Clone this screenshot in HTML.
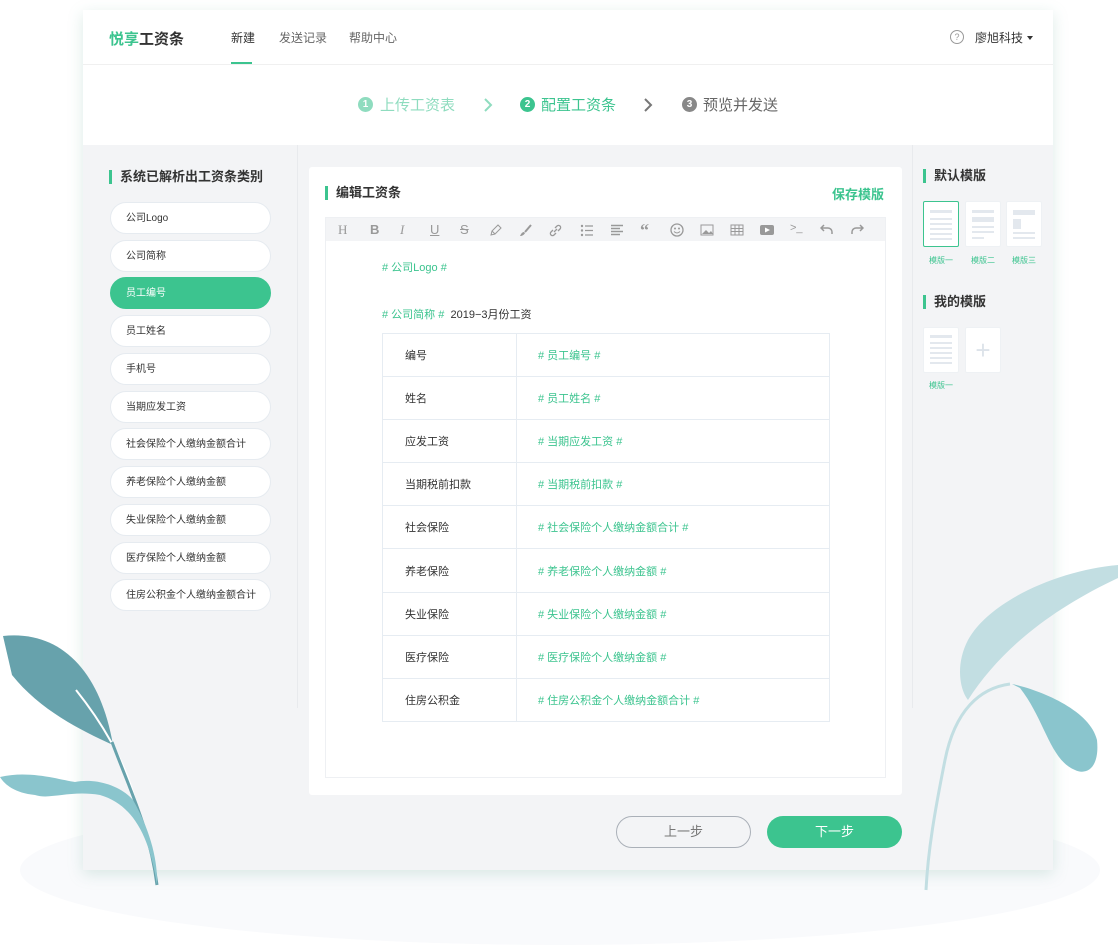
<!DOCTYPE html>
<html><head><meta charset="utf-8">
<style>
*{margin:0;padding:0;box-sizing:border-box}
body{width:1119px;height:950px;background:#fff;position:relative;overflow:hidden;font-family:"Liberation Sans","Noto Sans CJK SC",sans-serif;color:#333}
.a{position:absolute}
.card{left:83px;top:10px;width:970px;height:860px;background:#f3f4f6;box-shadow:0 4px 14px rgba(120,180,160,.25)}
.hdr{left:83px;top:10px;width:970px;height:135px;background:#fff}
.nav{font-size:12px;color:#666;top:29px}
.pill{left:110px;width:161px;height:32px;border-radius:16px;background:#fff;border:1px solid #e6ebf0;font-size:10px;padding-left:15px;line-height:32px;color:#333}
.pill.on{background:#3cc48f;color:#fff;border-color:#3cc48f}
.ttl{font-size:13px;color:#333;font-weight:bold;padding-left:8px;border-left:3px solid #3cc48f;line-height:14px}
.g{color:#3cc48f}
table{border-collapse:collapse;position:absolute;left:382px;top:333px;width:448px}
td{border:1px solid #e6ecf2;height:43.1px;font-size:11px}
td:first-child{width:134px;padding-left:22px;color:#333}
td:last-child{padding-left:21px;color:#3cc48f}
.tb{top:222px;font-size:13px;color:#999}
.tpl{width:36px;height:46px;background:#fff;border:1px solid #eef1f4;border-radius:2px}
.tl{font-size:8px;color:#3cc48f}
.ln{position:absolute;left:6px;right:6px;height:2px;background:#e3e8ee}
</style></head><body>
<svg class="a" style="left:0;top:0" width="1119" height="950">
<ellipse cx="560" cy="870" rx="540" ry="75" fill="#f9fafc"/>
</svg>
<div class="a card"></div>
<div class="a hdr"></div>
<div class="a" style="left:83px;top:64px;width:970px;height:1px;background:#f0f0f0"></div>
<div class="a" style="left:109px;top:28px;font-size:15px;font-weight:bold"><span class="g">悦享</span>工资条</div>
<div class="a nav" style="left:231px;color:#333">新建</div>
<div class="a" style="left:231px;top:62px;width:21px;height:2px;background:#3cc48f"></div>
<div class="a nav" style="left:279px">发送记录</div>
<div class="a nav" style="left:349px">帮助中心</div>
<div class="a" style="left:950px;top:30px;width:14px;height:14px;border:1px solid #999;border-radius:50%;font-size:9px;color:#999;text-align:center;line-height:12px">?</div>
<div class="a" style="left:975px;top:29px;font-size:12px;color:#333">廖旭科技</div>
<div class="a" style="left:1027px;top:36px;border-left:3px solid transparent;border-right:3px solid transparent;border-top:4px solid #333"></div>

<div class="a" style="left:358px;top:97px;width:15px;height:15px;border-radius:50%;background:#8fdcbf;color:#fff;font-size:10px;text-align:center;line-height:15px;font-weight:bold">1</div>
<div class="a" style="left:380px;top:94px;font-size:15px;color:#8fdcbf">上传工资表</div>
<svg class="a" style="left:482px;top:97px" width="12" height="16"><path d="M3 2l6 6-6 6" stroke="#8fdcbf" stroke-width="2" fill="none"/></svg>
<div class="a" style="left:520px;top:97px;width:15px;height:15px;border-radius:50%;background:#3cc48f;color:#fff;font-size:10px;text-align:center;line-height:15px;font-weight:bold">2</div>
<div class="a" style="left:541px;top:94px;font-size:15px;color:#3cc48f">配置工资条</div>
<svg class="a" style="left:642px;top:97px" width="12" height="16"><path d="M3 2l6 6-6 6" stroke="#777" stroke-width="2" fill="none"/></svg>
<div class="a" style="left:682px;top:97px;width:15px;height:15px;border-radius:50%;background:#888;color:#fff;font-size:10px;text-align:center;line-height:15px;font-weight:bold">3</div>
<div class="a" style="left:703px;top:94px;font-size:15px;color:#666">预览并发送</div>

<div class="a" style="left:297px;top:145px;width:1px;height:563px;background:#e8eaed"></div>
<div class="a" style="left:912px;top:145px;width:1px;height:563px;background:#e8eaed"></div>

<div class="a ttl" style="left:109px;top:170px">系统已解析出工资条类别</div>
<div class="a pill" style="top:202px">公司Logo</div>
<div class="a pill" style="top:240px">公司简称</div>
<div class="a pill on" style="top:277px">员工编号</div>
<div class="a pill" style="top:315px">员工姓名</div>
<div class="a pill" style="top:353px">手机号</div>
<div class="a pill" style="top:391px">当期应发工资</div>
<div class="a pill" style="top:428px">社会保险个人缴纳金额合计</div>
<div class="a pill" style="top:466px">养老保险个人缴纳金额</div>
<div class="a pill" style="top:504px">失业保险个人缴纳金额</div>
<div class="a pill" style="top:542px">医疗保险个人缴纳金额</div>
<div class="a pill" style="top:579px">住房公积金个人缴纳金额合计</div>

<div class="a" style="left:309px;top:167px;width:593px;height:628px;background:#fff;border-radius:3px"></div>
<div class="a ttl" style="left:325px;top:186px">编辑工资条</div>
<div class="a g" style="left:832px;top:184px;font-size:13px;font-weight:bold">保存模版</div>
<div class="a" style="left:325px;top:217px;width:561px;height:561px;border:1px solid #eef0f3"></div>
<div class="a" style="left:326px;top:218px;width:559px;height:23px;background:#f3f4f6"></div>
<div class="a tb" style="left:338px;font-family:'Liberation Serif',serif">H</div>
<div class="a tb" style="left:370px;font-weight:bold">B</div>
<div class="a tb" style="left:400px;font-style:italic;font-family:'Liberation Serif',serif">I</div>
<div class="a tb" style="left:430px;text-decoration:underline">U</div>
<div class="a tb" style="left:460px;text-decoration:line-through">S</div>
<svg class="a" style="left:489px;top:224px" width="13" height="13"><path d="M2 11l1-4 6-6 3 3-6 6z M3 7l3 3" stroke="#999" fill="none"/></svg>
<svg class="a" style="left:519px;top:224px" width="13" height="13"><path d="M12 1L6 8" stroke="#999" stroke-width="2"/><path d="M5 8c-2 0-3 2-4 4 2 0 4-1 5-3z" fill="#999"/></svg>
<svg class="a" style="left:549px;top:224px" width="13" height="13"><path d="M5 8l3-3M4 6l-2 2a2 2 0 003 3l2-2M9 7l2-2a2 2 0 00-3-3L6 4" stroke="#999" fill="none" stroke-width="1.3"/></svg>
<svg class="a" style="left:580px;top:224px" width="13" height="13"><circle cx="2" cy="2" r="1.2" fill="#999"/><circle cx="2" cy="6.5" r="1.2" fill="#999"/><circle cx="2" cy="11" r="1.2" fill="#999"/><path d="M5 2h8M5 6.5h8M5 11h8" stroke="#999" stroke-width="1.3"/></svg>
<svg class="a" style="left:610px;top:224px" width="13" height="13"><path d="M1 1.5h12M1 4.5h9M1 7.5h12M1 10.5h9" stroke="#999" stroke-width="1.6"/></svg>
<div class="a tb" style="left:640px;font-weight:bold;font-family:'Liberation Serif',serif;font-size:18px;top:220px">“</div>
<svg class="a" style="left:670px;top:223px" width="14" height="14"><circle cx="7" cy="7" r="6" stroke="#999" fill="none" stroke-width="1.3"/><circle cx="5" cy="5.5" r="1" fill="#999"/><circle cx="9" cy="5.5" r="1" fill="#999"/><path d="M4 8.5q3 3 6 0" stroke="#999" fill="none"/></svg>
<svg class="a" style="left:700px;top:224px" width="14" height="12"><rect x="1" y="1" width="12" height="10" fill="none" stroke="#999"/><path d="M2 10l4-4 3 3 2-2 2 3z" fill="#999"/></svg>
<svg class="a" style="left:730px;top:224px" width="14" height="12"><rect x="1" y="1" width="12" height="10" fill="none" stroke="#999"/><path d="M1 4.5h12M1 7.5h12M5 1v10M9 1v10" stroke="#999"/></svg>
<svg class="a" style="left:760px;top:224px" width="14" height="12"><rect x="0" y="1" width="14" height="10" rx="2" fill="#999"/><path d="M5 3.5l5 2.5-5 2.5z" fill="#fff"/></svg>
<div class="a tb" style="left:790px;font-size:11px">&gt;_</div>
<svg class="a" style="left:820px;top:223px" width="14" height="13"><path d="M4 2L1 5l3 3M1 5h7a4 4 0 014 4v2" stroke="#999" fill="none" stroke-width="1.5"/></svg>
<svg class="a" style="left:850px;top:223px" width="14" height="13"><path d="M10 2l3 3-3 3M13 5H6a4 4 0 00-4 4v2" stroke="#999" fill="none" stroke-width="1.5"/></svg>

<div class="a g" style="left:382px;top:259px;font-size:11px"># 公司Logo #</div>
<div class="a" style="left:382px;top:306px;font-size:11px"><span class="g"># 公司简称 #</span>&nbsp; 2019−3月份工资</div>
<table>
<tr><td>编号</td><td># 员工编号 #</td></tr>
<tr><td>姓名</td><td># 员工姓名 #</td></tr>
<tr><td>应发工资</td><td># 当期应发工资 #</td></tr>
<tr><td>当期税前扣款</td><td># 当期税前扣款 #</td></tr>
<tr><td>社会保险</td><td># 社会保险个人缴纳金额合计 #</td></tr>
<tr><td>养老保险</td><td># 养老保险个人缴纳金额 #</td></tr>
<tr><td>失业保险</td><td># 失业保险个人缴纳金额 #</td></tr>
<tr><td>医疗保险</td><td># 医疗保险个人缴纳金额 #</td></tr>
<tr><td>住房公积金</td><td># 住房公积金个人缴纳金额合计 #</td></tr>
</table>

<div class="a ttl" style="left:923px;top:169px">默认模版</div>
<div class="a tpl" style="left:923px;top:201px;border:1px solid #3cc48f"><div class="ln" style="top:8px;height:3px"></div><div class="ln" style="top:16px"></div><div class="ln" style="top:21px"></div><div class="ln" style="top:26px"></div><div class="ln" style="top:31px"></div><div class="ln" style="top:36px"></div></div>
<div class="a tpl" style="left:965px;top:201px"><div class="ln" style="top:8px;height:3px"></div><div class="ln" style="top:15px;height:5px"></div><div class="ln" style="top:24px"></div><div class="ln" style="top:29px"></div><div class="ln" style="top:35px;right:16px"></div></div>
<div class="a tpl" style="left:1006px;top:201px"><div class="ln" style="top:8px;height:5px"></div><div class="ln" style="top:17px;height:10px;right:20px"></div><div class="ln" style="top:30px"></div><div class="ln" style="top:35px"></div></div>
<div class="a tl" style="left:929px;top:255px">模版一</div>
<div class="a tl" style="left:971px;top:255px">模版二</div>
<div class="a tl" style="left:1012px;top:255px">模版三</div>
<div class="a ttl" style="left:923px;top:295px">我的模版</div>
<div class="a tpl" style="left:923px;top:327px"><div class="ln" style="top:7px;height:3px"></div><div class="ln" style="top:14px"></div><div class="ln" style="top:19px"></div><div class="ln" style="top:24px"></div><div class="ln" style="top:29px"></div><div class="ln" style="top:34px"></div></div>
<div class="a tpl" style="left:965px;top:327px;font-size:26px;color:#dde3ea;text-align:center;line-height:44px;font-weight:100">+</div>
<div class="a tl" style="left:929px;top:380px">模版一</div>

<div class="a" style="left:616px;top:816px;width:135px;height:32px;border:1px solid #aab0b8;border-radius:16px;text-align:center;line-height:30px;font-size:13px;color:#777">上一步</div>
<div class="a" style="left:767px;top:816px;width:135px;height:32px;background:#3cc48f;border-radius:16px;text-align:center;line-height:32px;font-size:13px;color:#fff">下一步</div>

<svg class="a" style="left:0;top:0" width="1119" height="950">
<path d="M3 636 C60 630 100 670 113 745 C80 730 40 710 12 675 Z" fill="#67a2ac"/>
<path d="M76 690 C100 720 125 760 135 800" stroke="#fff" stroke-width="2" fill="none"/>
<path d="M112 742 C130 790 150 830 157 885" stroke="#67a2ac" stroke-width="3" fill="none"/>
<path d="M0 777 C30 770 60 780 75 782 C95 778 120 785 133 800 C150 830 158 860 157 885 C150 840 135 805 100 795 C70 790 50 800 35 795 C15 793 5 785 0 777 Z" fill="#8ac5cd"/>
<path d="M1118 565 C1060 570 990 600 968 640 C955 665 960 690 968 700 C1000 650 1050 610 1118 578 Z" fill="#c2dee2"/>
<path d="M1012 684 C1040 690 1090 710 1097 740 C1100 770 1085 775 1075 770 C1050 760 1045 720 1020 688 Z" fill="#8ac5cd"/>
<path d="M1010 684 C980 688 955 710 945 760 C935 810 928 850 926 890" stroke="#c2dee2" stroke-width="3" fill="none"/>
</svg>
</body></html>
